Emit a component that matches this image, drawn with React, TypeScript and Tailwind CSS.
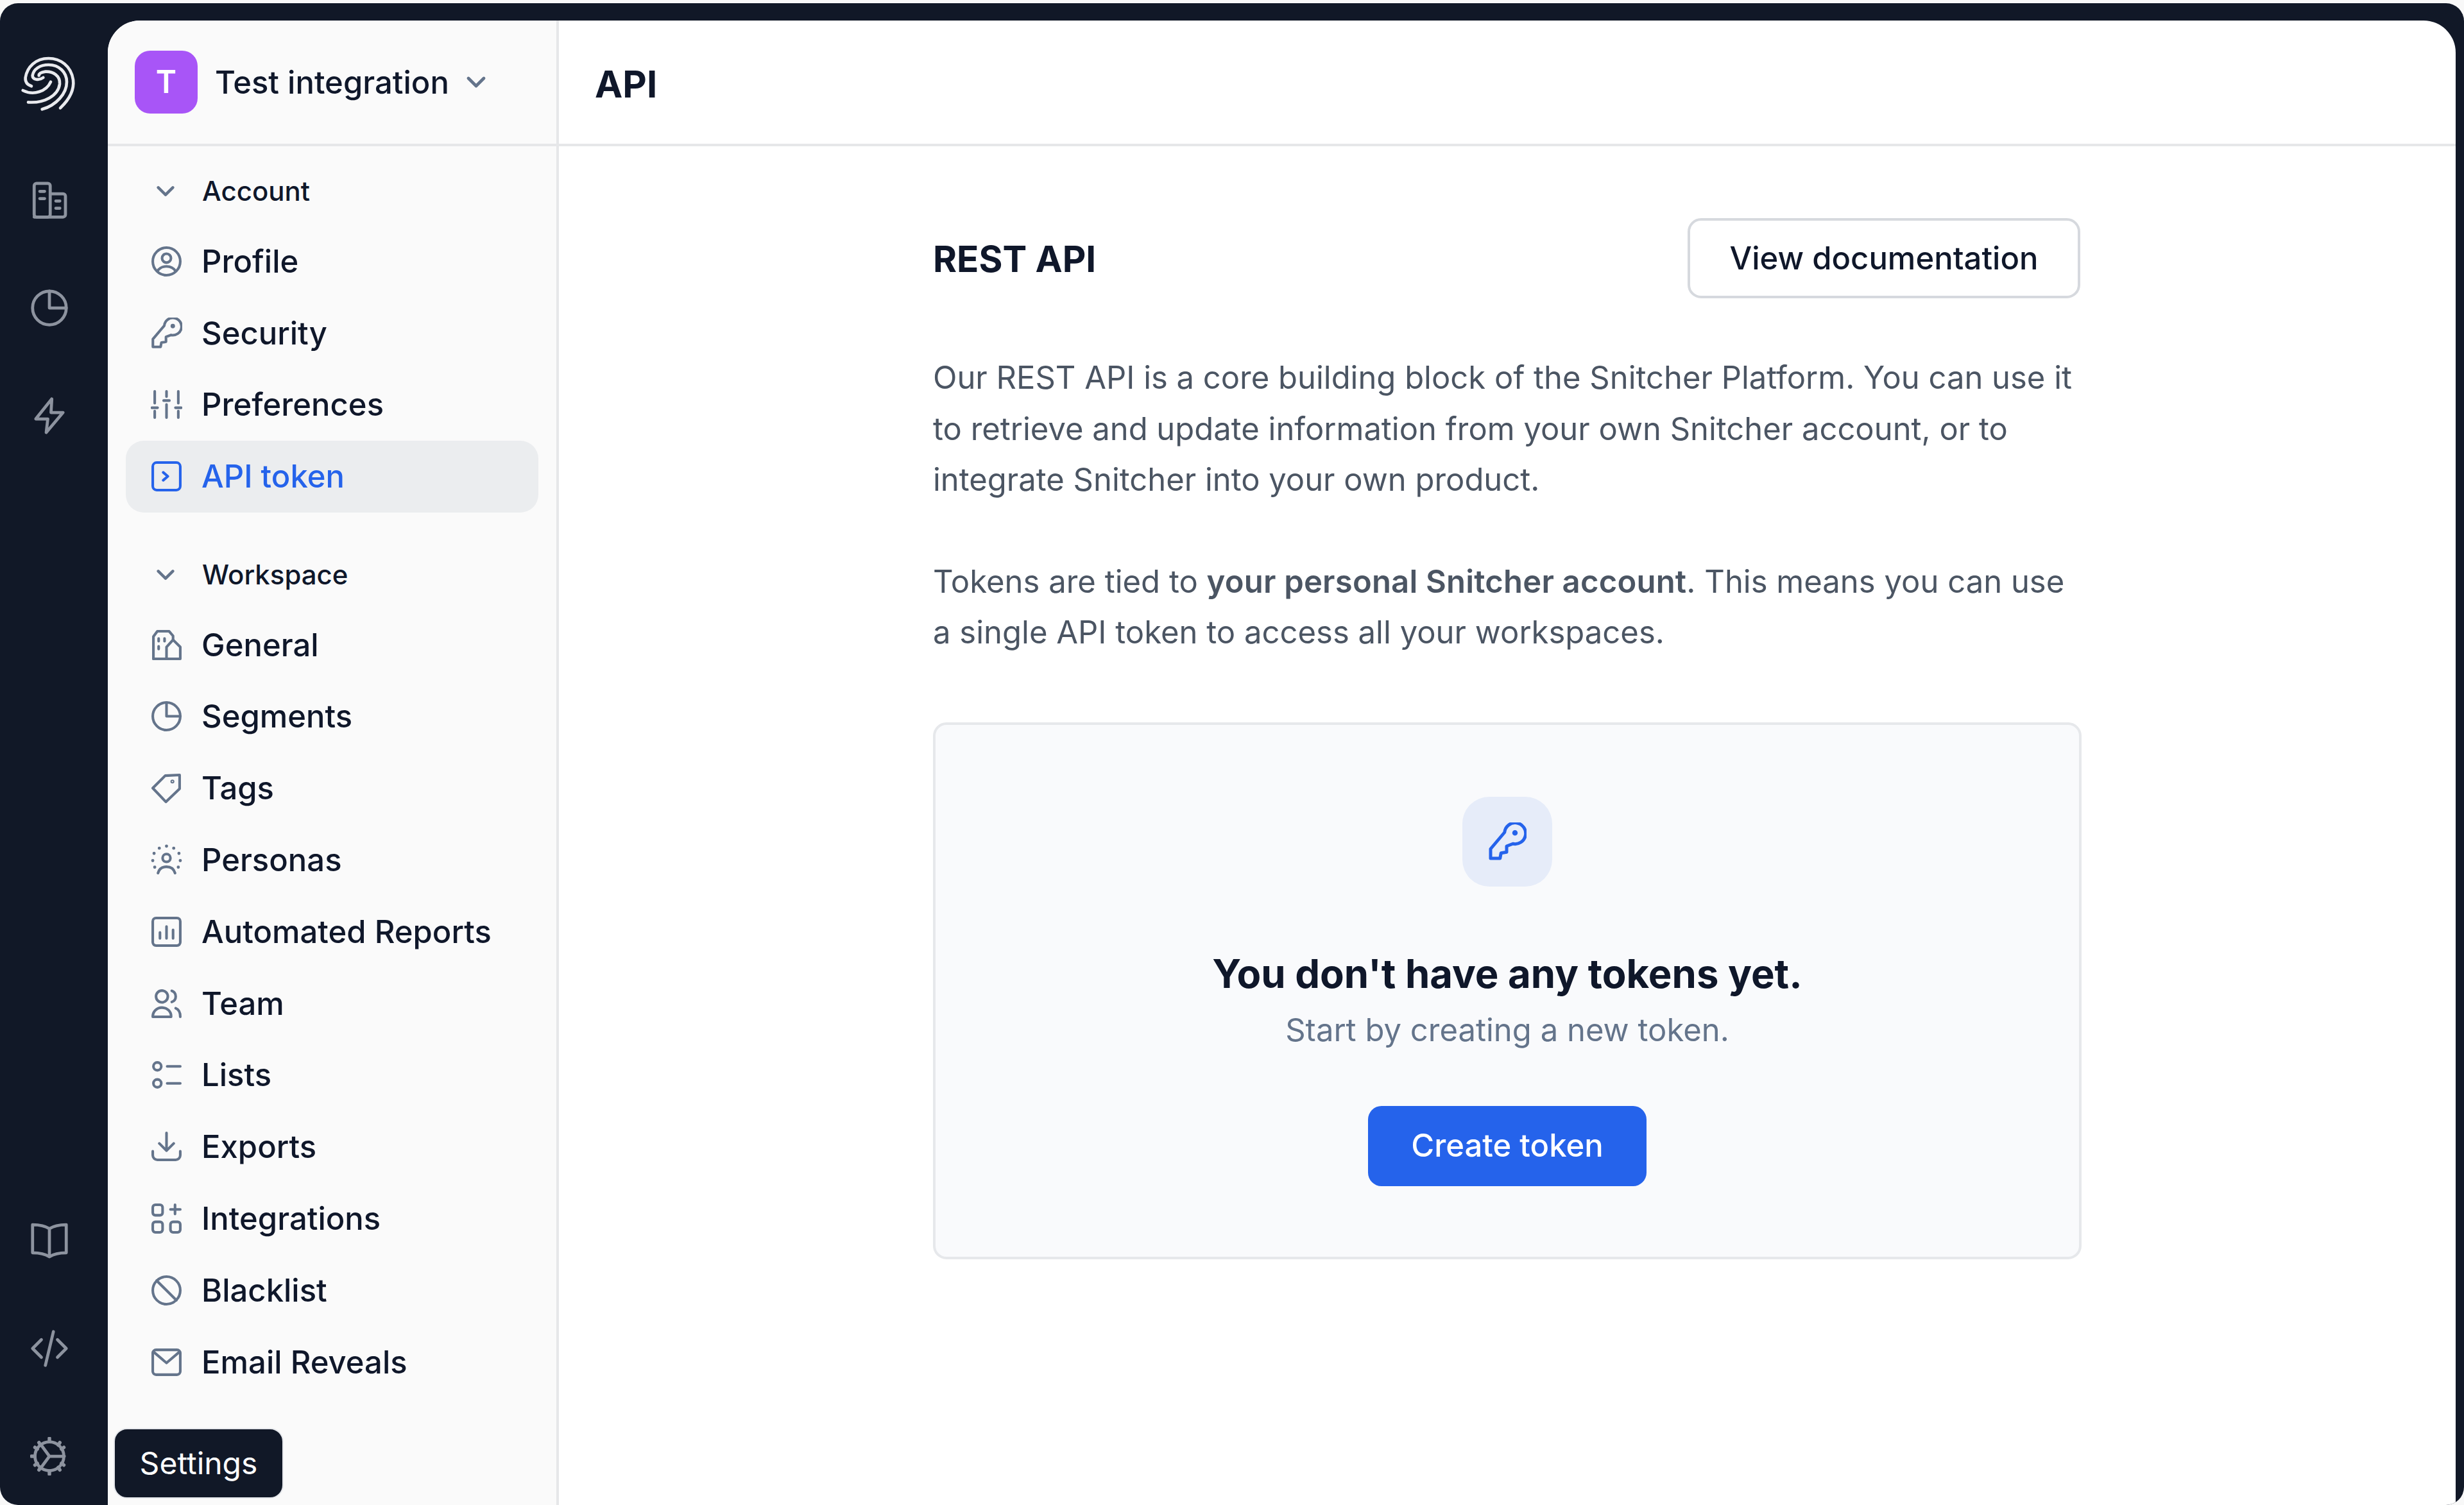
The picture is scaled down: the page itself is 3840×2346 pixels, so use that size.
import React from "react";

const S = ({ children, size = 49, sw = 2, cls = "text-[#64748b]" }: { children: React.ReactNode; size?: number; sw?: number; cls?: string }) => (
  <svg width={size} height={size} viewBox="0 0 24 24" fill="none" stroke="currentColor" strokeWidth={sw} strokeLinecap="round" strokeLinejoin="round" className={`${cls} shrink-0`}>
    {children}
  </svg>
);

const Chevron = ({ size = 34, cls = "text-[#64748b]" }: { size?: number; cls?: string }) => (
  <svg width={size} height={size} viewBox="0 0 24 24" fill="none" stroke="currentColor" strokeWidth={3.2} strokeLinecap="round" strokeLinejoin="round" className={`${cls} shrink-0`}>
    <path d="M4 8l8 8 8-8" />
  </svg>
);

const KeyPath = () => (
  <>
    <path d="M10.300 6.200L1.600 16.500V22.400H7.500L8.100 19.100L11.600 18.500V14.800L15.500 13.300A6.600 6.600 0 1 0 10.300 6.200z" />
    <circle cx="16.800" cy="6.500" r="0.700" fill="currentColor" />
  </>
);

const icons: Record<string, React.ReactNode> = {
  Profile: (<><circle cx="12" cy="12" r="10.500" /><circle cx="12" cy="9.500" r="3.400" /><path d="M5 19.500c1.600-2.600 4-3.700 7-3.700s5.400 1.100 7 3.700" /></>),
  Security: <KeyPath />,
  Preferences: (<><path d="M3 2v9M3 17v5M12 2v4M12 12v10M21 2v9M21 17v5" /><path d="M0.800 14.500h4.400M9.800 9h4.400M18.800 14.500h4.400" /></>),
  "API token": (<><rect x="1.500" y="1.500" width="21" height="21" rx="3" /><path d="M9.500 9l3.500 3-3.500 3" /></>),
  General: (<><path d="M2 22.500V5.500L5 1.500h9l3 3.500v3" /><path d="M2 22.500h20.500V13.500L17 8l-5 5.500v9" /><path d="M6 7v2M10.500 7v2M6 13v2" /></>),
  Segments: (<><circle cx="12" cy="12" r="10.500" /><path d="M12 1.500V12h10.500" /></>),
  Tags: (<><path d="M22 2v10.500L11.500 22.500 1.500 12 11 2.500z" /><circle cx="16.500" cy="7" r="0.500" /></>),
  Personas: (<><circle cx="12" cy="10.500" r="3" /><path d="M5.500 22c1-3.500 3.500-4.800 6.500-4.800s5.500 1.300 6.500 4.800" /><path d="M12 1.500v.01M6.500 3v.01M17.500 3v.01M2.500 7v.01M21.500 7v.01M1.500 12.500v.01M22.500 12.500v.01M3 17.500v.01M21 17.500v.01" strokeWidth={2.400} /></>),
  "Automated Reports": (<><rect x="1.500" y="1.500" width="21" height="21" rx="2.500" /><path d="M7 12.500V17M12 8v9M17 10.500V17" /></>),
  Team: (<><circle cx="8.500" cy="6.500" r="4.500" /><path d="M16 2.200a4.500 4.500 0 0 1 0 8.500" /><path d="M1.500 22c0-4 3-7 7-7s7 3 7 6.500v.5z" /><path d="M19 15.500c2 .8 3.500 3 3.500 6.500" /></>),
  Lists: (<><circle cx="5" cy="5.500" r="3" /><circle cx="5" cy="18.500" r="3" /><path d="M12.500 5.500h10M12.500 18.500h10" /></>),
  Exports: (<><path d="M12 1.500V15M6.500 9.500L12 15l5.500-5.500" /><path d="M1.500 15.500v3a3.500 3.500 0 0 0 3.500 3.500h14a3.500 3.500 0 0 0 3.500-3.500v-3" /></>),
  Integrations: (<><rect x="1.500" y="1.500" width="7.500" height="8" rx="2" /><rect x="1.500" y="14.500" width="7.500" height="8" rx="2" /><rect x="15" y="14.500" width="7.500" height="8" rx="2" /><path d="M18.500 1.500v7M15 5h7.500" /></>),
  Blacklist: (<><circle cx="12" cy="12" r="10.500" /><path d="M4.500 4.500l15 15" /></>),
  "Email Reveals": (<><rect x="1.500" y="2.500" width="21" height="19" rx="2.500" /><path d="M2 4l10 8.500L22 4" /></>),
};

const NavItem = ({ label, active }: { label: string; active?: boolean }) => (
  <div className={`flex h-[111.800px] items-center gap-[30px] rounded-[28px] pl-[39px] ${active ? "bg-[#ebedef] text-[#2563eb]" : "text-[#0f172a]"}`}>
    <S cls={active ? "text-[#2563eb]" : "text-[#64748b]"}>{icons[label]}</S>
    <span className="text-[49px] font-medium leading-none">{label}</span>
  </div>
);

const SectionHead = ({ label }: { label: string }) => (
  <div className="flex h-[106.500px] items-center gap-[40px] pl-[45px] text-[#0f172a]">
    <Chevron />
    <span className="text-[42px] font-medium leading-none">{label}</span>
  </div>
);

const RailBtn = ({ children }: { children: React.ReactNode }) => (
  <div className="flex h-[168px] w-[154px] items-center justify-center">
    <S size={60} sw={1.900} cls="text-[#8d939f]">{children}</S>
  </div>
);

export default function App() {
  return (
    <div className="h-[2346px] w-[3840px] overflow-hidden bg-[#f8f8f8] pt-[5px] font-['Inter',sans-serif]">
      <div className="flex h-[2341px] overflow-hidden rounded-[28px] bg-[#111827]">
        <aside className="relative flex w-[168px] shrink-0 flex-col">
          <div className="flex h-[223px] w-[158px] items-center justify-center pt-[28px]">
            <svg width="120" height="120" viewBox="0 0 360 360" fill="none" stroke="#e9eaee" strokeWidth="14" strokeLinecap="round">
              <path d="M225 292C275 245 290 200 285 160C275 95 225 60 170 60C110 60 70 100 62 150C60 175 75 185 90 190" />
              <path d="M140 298C205 280 255 225 255 170C255 125 220 90 170 90C130 90 100 110 95 140C95 160 125 165 145 150" />
              <path d="M75 265C150 270 215 235 222 180C225 140 190 120 155 122C135 125 125 130 125 140" />
              <path d="M50 210C100 235 160 215 180 170" />
            </svg>
          </div>
          <RailBtn>
            <rect x="2.500" y="1.500" width="10" height="21" rx="1.500" /><path d="M12.500 8h8a1.500 1.500 0 0 1 1.500 1.500V21a1.500 1.500 0 0 1-1.500 1.500H2.500" /><path d="M6 6.500h3M6 11h3M16 12.500h2.500M16 17h2.500" />
          </RailBtn>
          <RailBtn>
            <circle cx="12" cy="12" r="10.500" /><path d="M12 1.500V12h10.500" />
          </RailBtn>
          <RailBtn>
            <path d="M13.500 1.500L3.500 14h7.500l-1 8.500L20.500 10H13z" />
          </RailBtn>
          <div className="flex-1" />
          <div className="-mb-[8px]">
            <RailBtn>
              <path d="M12 4.500C9.500 2.800 6 2 1.500 2v17.500c4.500 0 8 .8 10.500 2.500 2.500-1.700 6-2.500 10.500-2.500V2C18 2 14.500 2.800 12 4.500zM12 4.500V21.500" />
            </RailBtn>
            <RailBtn>
              <path d="M7 6.500L1.500 12 7 17.500M17 6.500l5.500 5.500-5.500 5.500M14.500 1.500l-5 21" />
            </RailBtn>
            <RailBtn>
              <circle cx="12" cy="12" r="9" /><path d="M12 12L6.500 4.500M12 12l-5.500 7.500M12 12h9.300" /><path d="M12 .8v2M12 21.200v2M.8 12h2M18.500 3.500l-1 1.500M5.500 3.500l1 1.500M18.500 20.500l-1-1.500M5.500 20.500l1-1.500M3 6.500l1.500 1M21 6.500l-1.500 1M3 17.500l1.500-1M21 17.500l-1.500-1" strokeWidth={2.200} />
            </RailBtn>
          </div>
          <div className="absolute left-[177px] top-[2221px] z-10 flex h-[110px] w-[265px] items-center justify-center rounded-[21px] border-[2px] border-[#e5e7eb] bg-[#111827] text-[48px] font-normal text-white">
            Settings
          </div>
        </aside>

        <main className="mr-[13px] mt-[27px] flex flex-1 overflow-hidden rounded-t-[50px] bg-white">
          <nav className="w-[703px] shrink-0 border-r-[4px] border-[#e6e7e9] bg-[#fafafa]">
            <div className="flex h-[196px] items-center border-b-[4px] border-[#e6e7e9] pl-[42px] text-[#0f172a]">
              <div className="flex h-[98px] w-[98px] items-center justify-center rounded-[24px] bg-[#a855f7] text-[49px] font-semibold text-white">T</div>
              <span className="ml-[27px] text-[49px] font-medium leading-none">Test integration</span>
              <span className="ml-[24px]"><Chevron size={36} /></span>
            </div>
            <div className="px-[28px] pt-[17px]">
              <SectionHead label="Account" />
              {["Profile", "Security", "Preferences"].map((l) => <NavItem key={l} label={l} />)}
              <NavItem label="API token" active />
              <div className="mt-[44px]">
                <SectionHead label="Workspace" />
              </div>
              {["General", "Segments", "Tags", "Personas", "Automated Reports", "Team", "Lists", "Exports", "Integrations", "Blacklist", "Email Reveals"].map((l) => <NavItem key={l} label={l} />)}
            </div>
          </nav>

          <section className="flex-1">
            <header className="flex h-[196px] items-center border-b-[4px] border-[#e6e7e9] pl-[56px] pt-[6px]">
              <h1 className="text-[58px] font-bold leading-none text-[#0f172a]">API</h1>
            </header>
            <div className="mx-auto w-[1790px] pt-[112px]">
              <div className="flex items-center justify-between">
                <h2 className="pt-[3px] text-[56.500px] font-bold leading-none text-[#0f172a]">REST API</h2>
                <button className="mr-[2px] flex h-[125px] w-[612px] items-center justify-center rounded-[21px] border-[4px] border-[#d6d9de] bg-white text-[49px] font-medium text-[#0f172a]">View documentation</button>
              </div>
              <p className="mt-[84px] pr-[2px] text-[48.950px] leading-[79.600px] text-[#4b5563]">
                Our REST API is a core building block of the Snitcher Platform. You can use it to retrieve and update information from your own Snitcher account, or to integrate Snitcher into your own product.
              </p>
              <p className="mt-[79px] text-[49px] leading-[79.600px] text-[#4b5563]">
                Tokens are tied to <span className="font-semibold tracking-[0.2px]">your personal Snitcher account</span>. This means you can use a single API token to access all your workspaces.
              </p>
              <div className="mt-[100px] flex h-[837px] flex-col items-center rounded-[21px] border-[4px] border-[#e6e8eb] bg-[#f9fafc] pt-[112px]">
                <div className="flex h-[140px] w-[140px] items-center justify-center rounded-[42px] bg-[#e6ecf9]">
                  <S size={60} sw={2} cls="text-[#2563eb]"><KeyPath /></S>
                </div>
                <h3 className="mt-[105px] text-[61.600px] font-bold leading-none text-[#0f172a]">You don't have any tokens yet.</h3>
                <p className="mt-[32px] text-[49px] leading-none text-[#64748b]">Start by creating a new token.</p>
                <button className="mt-[94px] flex h-[125px] w-[434px] items-center justify-center rounded-[21px] bg-[#2563eb] text-[49px] font-medium text-white">Create token</button>
              </div>
            </div>
          </section>
        </main>
      </div>
    </div>
  );
}
